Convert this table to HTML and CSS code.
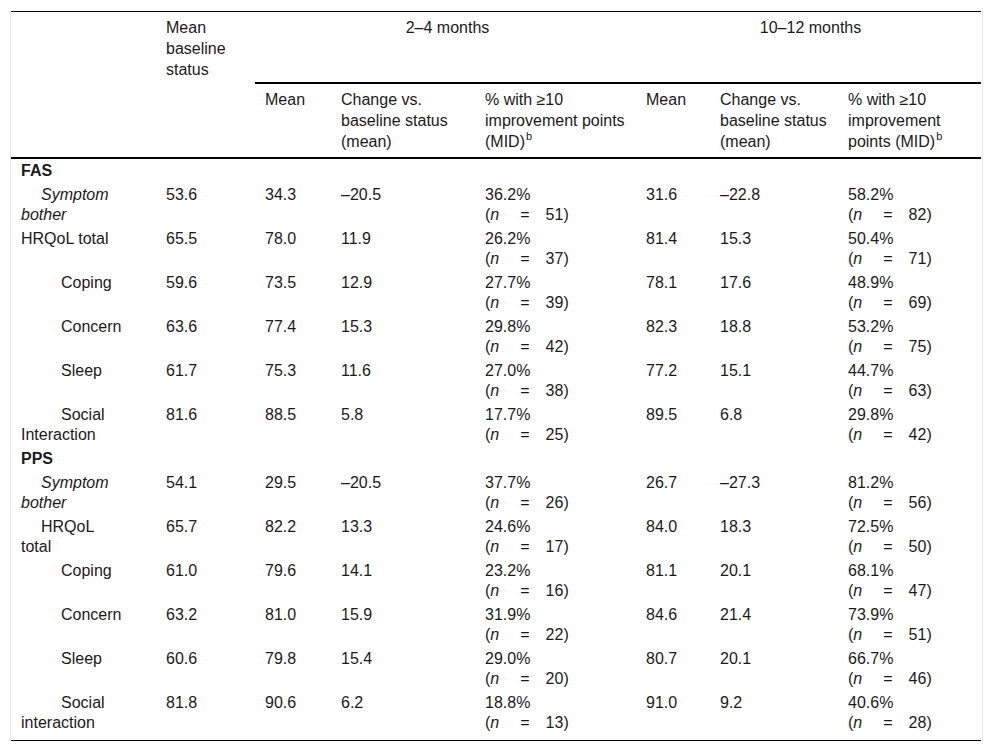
FILE: index.html
```html
<!DOCTYPE html>
<html lang="en">
<head>
<meta charset="utf-8">
<title>Table</title>
<link rel="stylesheet" href="styles.css">
</head>
<body>
<div class="wrap">
<table class="data">
  <colgroup>
    <col class="c1"><col class="c2"><col class="c3"><col class="c4"><col class="c5"><col class="c6"><col class="c7"><col class="c8">
  </colgroup>
  <thead>
    <tr class="h1">
      <th></th>
      <th>Mean baseline status</th>
      <th colspan="3" class="grp">2–4 months</th>
      <th colspan="3" class="grp">10–12 months</th>
    </tr>
    <tr class="h2">
      <th class="nob"></th>
      <th class="nob"></th>
      <th>Mean</th>
      <th>Change vs. baseline status (mean)</th>
      <th>% with ≥10 improvement points (MID)<sup>b</sup></th>
      <th>Mean</th>
      <th>Change vs. baseline status (mean)</th>
      <th>% with ≥10 improvement points (MID)<sup>b</sup></th>
    </tr>
  </thead>
  <tbody>
    <tr><td class="sec" colspan="8">FAS</td></tr>
    <tr><td class="i1"><i>Symptom bother</i></td><td>53.6</td><td>34.3</td><td>–20.5</td><td>36.2%<br><span class="nv">(<i>n</i><span class="eq">=</span>51)</span></td><td>31.6</td><td>–22.8</td><td>58.2%<br><span class="nv">(<i>n</i><span class="eq">=</span>82)</span></td></tr>
    <tr><td>HRQoL total</td><td>65.5</td><td>78.0</td><td>11.9</td><td>26.2%<br><span class="nv">(<i>n</i><span class="eq">=</span>37)</span></td><td>81.4</td><td>15.3</td><td>50.4%<br><span class="nv">(<i>n</i><span class="eq">=</span>71)</span></td></tr>
    <tr><td class="i2">Coping</td><td>59.6</td><td>73.5</td><td>12.9</td><td>27.7%<br><span class="nv">(<i>n</i><span class="eq">=</span>39)</span></td><td>78.1</td><td>17.6</td><td>48.9%<br><span class="nv">(<i>n</i><span class="eq">=</span>69)</span></td></tr>
    <tr><td class="i2">Concern</td><td>63.6</td><td>77.4</td><td>15.3</td><td>29.8%<br><span class="nv">(<i>n</i><span class="eq">=</span>42)</span></td><td>82.3</td><td>18.8</td><td>53.2%<br><span class="nv">(<i>n</i><span class="eq">=</span>75)</span></td></tr>
    <tr><td class="i2">Sleep</td><td>61.7</td><td>75.3</td><td>11.6</td><td>27.0%<br><span class="nv">(<i>n</i><span class="eq">=</span>38)</span></td><td>77.2</td><td>15.1</td><td>44.7%<br><span class="nv">(<i>n</i><span class="eq">=</span>63)</span></td></tr>
    <tr><td class="i2">Social Interaction</td><td>81.6</td><td>88.5</td><td>5.8</td><td>17.7%<br><span class="nv">(<i>n</i><span class="eq">=</span>25)</span></td><td>89.5</td><td>6.8</td><td>29.8%<br><span class="nv">(<i>n</i><span class="eq">=</span>42)</span></td></tr>
    <tr><td class="sec" colspan="8">PPS</td></tr>
    <tr><td class="i1"><i>Symptom bother</i></td><td>54.1</td><td>29.5</td><td>–20.5</td><td>37.7%<br><span class="nv">(<i>n</i><span class="eq">=</span>26)</span></td><td>26.7</td><td>–27.3</td><td>81.2%<br><span class="nv">(<i>n</i><span class="eq">=</span>56)</span></td></tr>
    <tr><td class="i1">HRQoL total</td><td>65.7</td><td>82.2</td><td>13.3</td><td>24.6%<br><span class="nv">(<i>n</i><span class="eq">=</span>17)</span></td><td>84.0</td><td>18.3</td><td>72.5%<br><span class="nv">(<i>n</i><span class="eq">=</span>50)</span></td></tr>
    <tr><td class="i2">Coping</td><td>61.0</td><td>79.6</td><td>14.1</td><td>23.2%<br><span class="nv">(<i>n</i><span class="eq">=</span>16)</span></td><td>81.1</td><td>20.1</td><td>68.1%<br><span class="nv">(<i>n</i><span class="eq">=</span>47)</span></td></tr>
    <tr><td class="i2">Concern</td><td>63.2</td><td>81.0</td><td>15.9</td><td>31.9%<br><span class="nv">(<i>n</i><span class="eq">=</span>22)</span></td><td>84.6</td><td>21.4</td><td>73.9%<br><span class="nv">(<i>n</i><span class="eq">=</span>51)</span></td></tr>
    <tr><td class="i2">Sleep</td><td>60.6</td><td>79.8</td><td>15.4</td><td>29.0%<br><span class="nv">(<i>n</i><span class="eq">=</span>20)</span></td><td>80.7</td><td>20.1</td><td>66.7%<br><span class="nv">(<i>n</i><span class="eq">=</span>46)</span></td></tr>
    <tr class="last"><td class="i2">Social interaction</td><td>81.8</td><td>90.6</td><td>6.2</td><td>18.8%<br><span class="nv">(<i>n</i><span class="eq">=</span>13)</span></td><td>91.0</td><td>9.2</td><td>40.6%<br><span class="nv">(<i>n</i><span class="eq">=</span>28)</span></td></tr>
  </tbody>
</table>
</div>
</body>
</html>
```
FILE: styles.css
```css
html, body {
  margin: 0;
  padding: 0;
  background: #ffffff;
}

body {
  font-family: "Liberation Sans", Arial, sans-serif;
  font-size: 16px;
  line-height: 20px;
  color: #1a1a1a;
}

.wrap {
  margin: 11px 0 0 10px;
  width: 971px;
  border-left: 1px solid #e6e6e6;
  border-right: 1px solid #e6e6e6;
}

.data {
  width: 970px;
  table-layout: fixed;
  border-collapse: collapse;
  border-top: 1px solid #000;
  border-bottom: 1px solid #000;
}

.c1 { width: 145px; }
.c2 { width: 99px; }
.c3 { width: 76px; }
.c4 { width: 144px; }
.c5 { width: 161px; }
.c6 { width: 74px; }
.c7 { width: 128px; }
.c8 { width: 143px; }

.data th,
.data td {
  padding: 2px 6px 2px 10px;
  text-align: left;
  vertical-align: top;
  font-weight: normal;
}

.data td:first-child {
  padding-right: 30px;
}

.data thead th {
  line-height: 21px;
}

.data .h1 th {
  padding-top: 5px;
  padding-bottom: 3px;
}

.data .h2 th {
  padding-top: 5px;
  padding-bottom: 5px;
}

.data thead th.grp {
  text-align: center;
}

.data .h2 th {
  border-top: 2px solid #000;
}

.data .h2 th.nob {
  border-top: none;
}

.data thead {
  border-bottom: 2px solid #000;
}

.data sup {
  font-size: 11px;
  line-height: 1;
  vertical-align: 7px;
  margin-left: 1px;
}

.data td.sec {
  font-weight: bold;
}

.i1 { text-indent: 20px; }
.i2 { text-indent: 40px; }

.nv .eq {
  margin: 0 16px 0 21px;
}

.data .last td {
  padding-bottom: 7px;
}
```
